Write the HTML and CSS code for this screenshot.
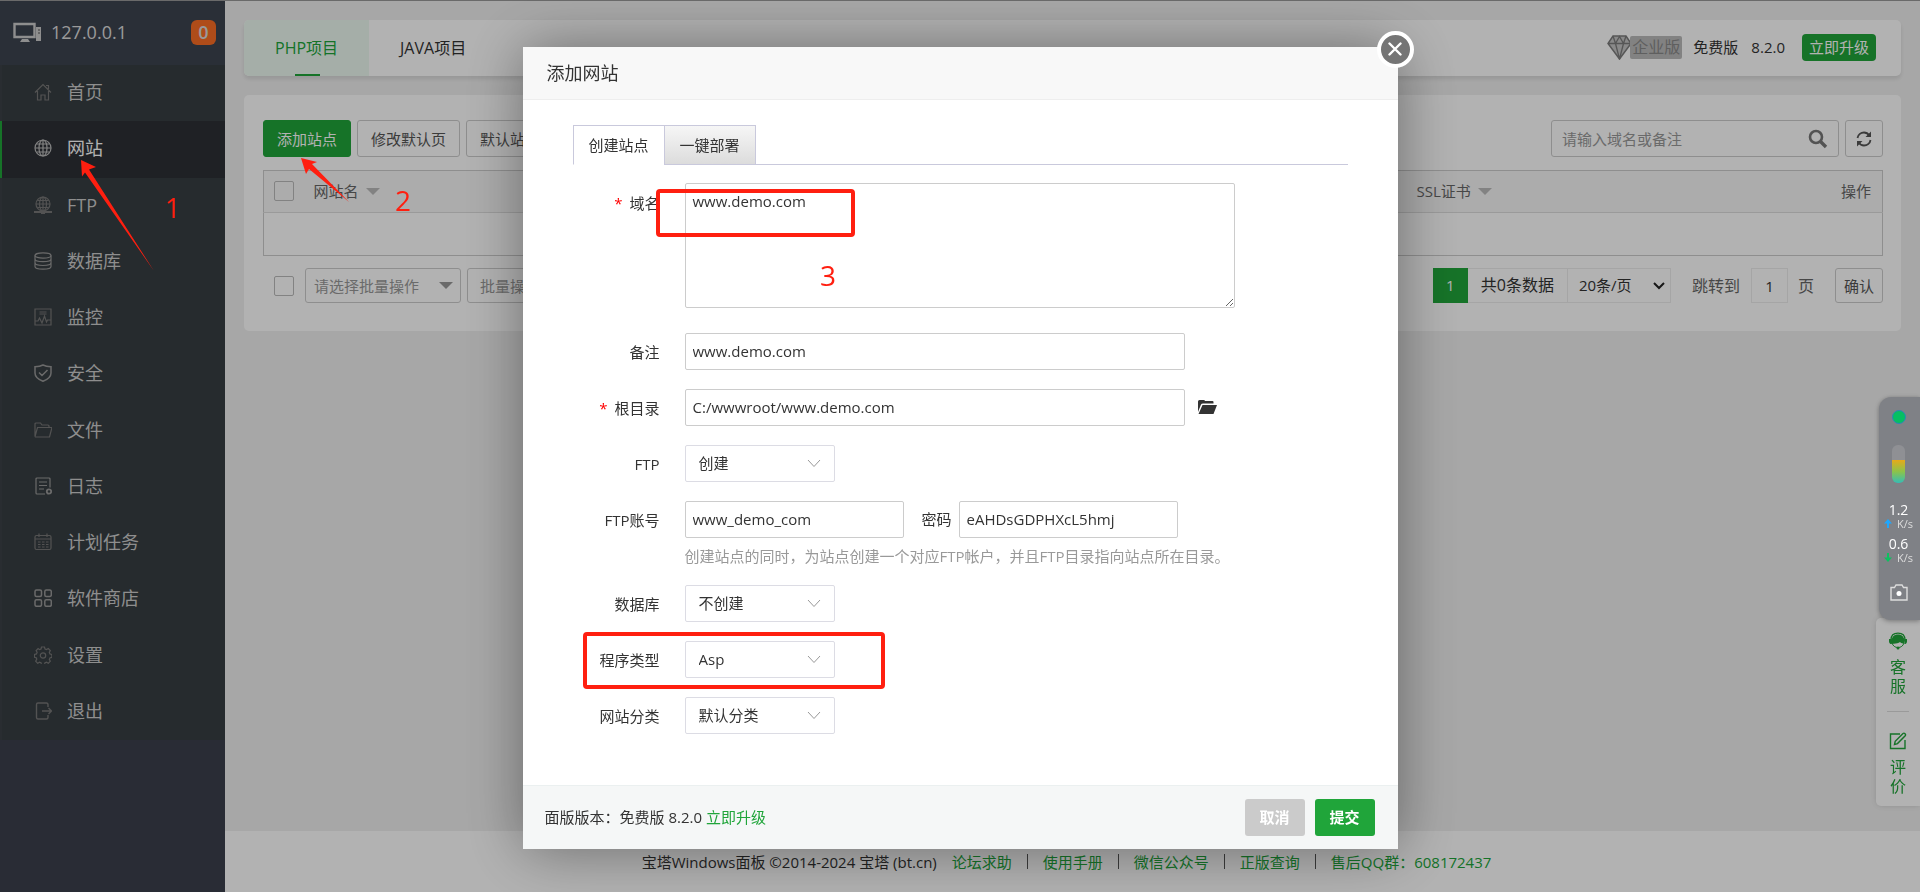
FILE: index.html
```html
<!DOCTYPE html>
<html lang="zh-CN">
<head>
<meta charset="utf-8">
<title>宝塔Windows面板</title>
<link rel="stylesheet" href="styles.css">
</head>
<body>
<div class="app">
  <aside class="sidebar">
    <div class="host">
      <svg width="29" height="21" viewBox="0 0 29 21" fill="none"><path d="M1.5 2h20v13h-20z" stroke="#ccc" stroke-width="2.4"/><path d="M9 17h6l2 3H7z" fill="#ccc"/><path d="M23 5h5v14h-5z" fill="#ccc"/><path d="M25 8h2M25 11h2" stroke="#555"/></svg>
      <span class="host-ip">127.0.0.1</span>
      <span class="host-count">0</span>
    </div>
    <nav class="menu">
      <a class="menu-item" href="#"><svg class="ico" viewBox="0 0 18 18"><path d="M1 9.500 9 1.500l8 8M3.500 8v9h3.500v-5h4v5h3.500V8M12 2.500h2.500V6"/></svg>首页</a>
      <a class="menu-item active" href="#"><svg class="ico" viewBox="0 0 18 18"><circle cx="9" cy="9" r="8"/><ellipse cx="9" cy="9" rx="4" ry="8"/><path d="M9 1v16M1 9h16M2.500 5h13M2.500 13h13"/></svg>网站</a>
      <a class="menu-item" href="#"><svg class="ico" viewBox="0 0 18 18"><circle cx="9" cy="8" r="7"/><ellipse cx="9" cy="8" rx="3.500" ry="7"/><path d="M9 1v14M2 8h14M3.500 4.500h11M3.500 11.500h11"/><path d="M0 16h18" stroke-width="2"/><path d="M7 16.500h4" stroke-width="3"/></svg>FTP</a>
      <a class="menu-item" href="#"><svg class="ico bright" viewBox="0 0 18 18"><ellipse cx="9" cy="3.500" rx="8" ry="2.700"/><path d="M1 3.500v11c0 3.600 16 3.600 16 0v-11M1 7c0 3.600 16 3.600 16 0M1 10.800c0 3.600 16 3.600 16 0"/></svg>数据库</a>
      <a class="menu-item" href="#"><svg class="ico" viewBox="0 0 18 18"><path d="M1 1h16v16H1zM5.500 4h7M5.500 6h7M1 13h3l1.500-3L8 15l2.500-7 2 6 1-2H17"/></svg>监控</a>
      <a class="menu-item" href="#"><svg class="ico bright" viewBox="0 0 18 18"><path stroke-width="1.500" d="M9 1c3 1.700 5 1.700 8 1.700V9c0 4-3.500 6.500-8 8.300C4.500 15.500 1 13 1 9V2.700C4 2.700 6 2.700 9 1zM5 8.500l3 3L13.500 6"/></svg>安全</a>
      <a class="menu-item" href="#"><svg class="ico" viewBox="0 0 18 18"><path d="M1 15V3q0-1 1-1h4.500l1.500 2h6q1 0 1 1v1.500M1 15.500 3.500 6.500H18L15.500 16H2q-1 0-1-1z"/></svg>文件</a>
      <a class="menu-item" href="#"><svg class="ico bright" viewBox="0 0 18 18"><path d="M16 10.500V2q0-1-1-1H3Q2 1 2 2v14q0 1 1 1h8M5 5h8M5 8.500h8M5 12h5"/><circle cx="15" cy="14.500" r="2.200" stroke-width="1.800"/></svg>日志</a>
      <a class="menu-item" href="#"><svg class="ico" viewBox="0 0 18 18"><rect x="1" y="2.500" width="16" height="14" rx="1.500"/><path d="M1 6h16M5 .5V4M13 .5V4"/><path stroke-dasharray="2.500 1.500" d="M4 9h10.500M4 11.500h10.500M4 14h10.500"/></svg>计划任务</a>
      <a class="menu-item" href="#"><svg class="ico bright" viewBox="0 0 18 18"><g stroke-width="1.500"><rect x="1" y="1" width="6.500" height="6.500" rx="1.500"/><rect x="10.800" y="1" width="6.500" height="6.500" rx="1.500"/><rect x="1" y="10.800" width="6.500" height="6.500" rx="1.500"/><rect x="10.800" y="10.800" width="6.500" height="6.500" rx="1.500"/></g></svg>软件商店</a>
      <a class="menu-item" href="#"><svg class="ico" viewBox="0 0 18 18"><path d="M7.500 1h3l.5 2 1.500.6 1.800-1.100 2 2.100-1 1.800.6 1.500 2 .6v2.800l-2 .6-.6 1.500 1 1.800-2 2.100-1.800-1.100-1.500.6-.5 2h-3l-.5-2-1.500-.6-1.800 1.100-2-2.100 1-1.800L2.500 12l-2-.7V8.500l2-.6.6-1.500-1-1.800 2-2.100L5.500 3.600 7 3z"/><circle cx="9" cy="9.500" r="2.700"/></svg>设置</a>
      <a class="menu-item" href="#"><svg class="ico" viewBox="0 0 18 18"><path stroke-width="1.400" d="M14 5V2.500Q14 1 12.500 1H4Q2.500 1 2.500 2.500v13Q2.500 17 4 17h8.500q1.500 0 1.500-1.500V13M8 9h9.500M14.500 6l3 3-3 3"/></svg>退出</a>
    </nav>
  </aside>

  <div class="main">
    <main class="content">
      <section class="card topbar">
        <nav class="tabs">
          <a class="tab active" href="#">PHP项目</a>
          <a class="tab" href="#">JAVA项目</a>
        </nav>
        <div class="version">
          <span class="badge">
            <svg width="25" height="25" viewBox="0 0 25 25"><path d="M6 1h13l5 7.500L12.500 24 1 8.500z" fill="#c4c4c4" stroke="#7c7c7c" stroke-width="1.500"/><path d="M1 8.500h23M6 1l2.500 7.500L12.500 24l4-15.500L19 1M8.500 8.500l4-7 4 7" fill="none" stroke="#7c7c7c" stroke-width="1.300"/></svg>
            <span class="badge-text">企业版</span>
          </span>
          <span>免费版</span>
          <span class="version-no">8.2.0</span>
          <button class="upgrade" type="button">立即升级</button>
        </div>
      </section>

      <section class="card sites">
        <div class="toolbar">
          <button class="btn primary" type="button">添加站点</button>
          <button class="btn" type="button">修改默认页</button>
          <button class="btn" type="button">默认站点</button>
          <div class="search">
            <input class="search-input" type="text" placeholder="请输入域名或备注" aria-label="搜索">
            <svg width="20" height="20" viewBox="0 0 20 20" fill="none" stroke="#777"><circle cx="8" cy="8" r="6" stroke-width="2.600"/><path d="M12.500 12.500 18 18" stroke-width="3.400"/></svg>
          </div>
          <button class="btn square" type="button" aria-label="刷新"><svg width="16" height="16" viewBox="0 0 16 16" fill="none" stroke="#555" stroke-width="1.800"><path d="M1.500 7C2 3.500 5 1.500 8 1.500c2 0 4 1 5.300 3M14.500 9c-.5 3.500-3.500 5.500-6.500 5.500-2 0-4-1-5.300-3"/><path d="M15 .5V6H9.500zM1 15.500V10h5.500z" fill="#555" stroke="none"/></svg></button>
        </div>
        <table class="grid">
          <thead><tr>
            <th class="col-check"><input class="check" type="checkbox" aria-label="全选"></th>
            <th class="col-name">网站名<i class="caret"></i></th>
            <th class="col-ssl">SSL证书<i class="caret"></i></th>
            <th class="col-op">操作</th>
          </tr></thead>
          <tbody><tr><td colspan="4"></td></tr></tbody>
        </table>
        <div class="pager">
          <input class="check" type="checkbox" aria-label="选择全部站点">
          <div class="batch"><select class="batch-select" aria-label="批量操作"><option>请选择批量操作</option></select><i class="caret"></i></div>
          <button class="btn batch-btn" type="button">批量操作</button>
          <div class="pages">
            <span class="page-current">1</span>
            <span class="page-cell">共0条数据</span>
            <div class="page-size"><select aria-label="每页条数"><option>20条/页</option></select><svg width="12" height="8" viewBox="0 0 12 8" fill="none" stroke="#222" stroke-width="2"><path d="m1 1 5 5 5-5"/></svg></div>
          </div>
          <label class="jump" for="jump">跳转到</label>
          <input class="jump-input" id="jump" type="text" value="1">
          <span class="jump-unit">页</span>
          <button class="btn confirm" type="button">确认</button>
        </div>
      </section>
    </main>
    <footer class="footer">
      <span>宝塔Windows面板 ©2014-2024 宝塔 (bt.cn)</span>
      <a href="#">论坛求助</a><i class="bar"></i><a href="#">使用手册</a><i class="bar"></i><a href="#">微信公众号</a><i class="bar"></i><a href="#">正版查询</a><i class="bar"></i><a href="#">售后QQ群：608172437</a>
    </footer>
  </div>
</div>

<aside class="service">
  <a class="service-item" href="#"><svg width="18" height="18" viewBox="0 0 18 18"><path d="M2 8C2 3.500 5 1.200 9 1.200S16 3.500 16 8" fill="none" stroke="#20a53a" stroke-width="1.300"/><path d="M2.500 8.500C3 4.500 5.500 2.500 9 2.500s6 2 6.500 6l.5 3c-2.500 0-4-.5-5-1.500-2 1.500-5 2-9 1.500zM0 7h2.500v5H1.500Q0 11 0 9.500zM18 7h-2.500v5h1Q18 11 18 9.500z" fill="#20a53a"/><path d="M3 11c1 3 3 4.500 6 4.500s5-1.500 6-4.500" fill="none" stroke="#20a53a"/><circle cx="9" cy="16" r="1.500" fill="#20a53a"/></svg><span>客服</span></a>
  <a class="service-item" href="#"><svg width="18" height="18" viewBox="0 0 18 18" fill="none" stroke="#20a53a" stroke-width="1.400"><path d="M11 2H1.500v14.500H16V8M5.500 12.500l.7-3.200L14 1.500q1-.8 2 .2t.2 2L8.500 11.600z"/></svg><span>评价</span></a>
</aside>

<div class="overlay">
  <form class="modal" role="dialog" aria-labelledby="modal-title">
    <header class="modal-head" id="modal-title">添加网站</header>
    <button class="close" type="button" aria-label="关闭"><svg width="14" height="14" viewBox="0 0 14 14" stroke="#fff" stroke-width="2.400" stroke-linecap="round"><path d="m1.500 1.500 11 11M12.500 1.500l-11 11"/></svg></button>
    <div class="modal-body">
      <div class="mtabs">
        <button class="mtab active" type="button">创建站点</button><button class="mtab" type="button">一键部署</button>
      </div>
      <div class="row row-area">
        <label class="label" for="domain"><em>*</em>域名</label>
        <textarea class="field area" id="domain">www.demo.com</textarea>
      </div>
      <div class="row">
        <label class="label" for="note">备注</label>
        <input class="field wide" id="note" type="text" value="www.demo.com">
      </div>
      <div class="row">
        <label class="label" for="root"><em>*</em>根目录</label>
        <input class="field wide" id="root" type="text" value="C:/wwwroot/www.demo.com">
        <svg class="folder" width="20" height="16" viewBox="0 0 20 16" fill="#333"><path d="M1 13V2.500Q1 1 2.500 1h4Q8 1 8 2h7.500q1 0 1 1v1.500H6q-1.500 0-2 1zM5.500 6H20l-3.500 9H1.500z"/></svg>
      </div>
      <div class="row">
        <label class="label" for="ftp">FTP</label>
        <div class="select"><select id="ftp"><option>创建</option></select><svg width="14" height="9" viewBox="0 0 14 9"><path d="m1 1 6 6.500L13 1"/></svg></div>
      </div>
      <div class="row row-tight">
        <label class="label" for="account">FTP账号</label>
        <input class="field half" id="account" type="text" value="www_demo_com">
        <label class="pwd" for="pwd">密码</label>
        <input class="field half" id="pwd" type="text" value="eAHDsGDPHXcL5hmj">
      </div>
      <p class="hint">创建站点的同时，为站点创建一个对应FTP帐户，并且FTP目录指向站点所在目录。</p>
      <div class="row">
        <label class="label" for="db">数据库</label>
        <div class="select"><select id="db"><option>不创建</option></select><svg width="14" height="9" viewBox="0 0 14 9"><path d="m1 1 6 6.500L13 1"/></svg></div>
      </div>
      <div class="row">
        <label class="label" for="type">程序类型</label>
        <div class="select"><select id="type"><option>Asp</option></select><svg width="14" height="9" viewBox="0 0 14 9"><path d="m1 1 6 6.500L13 1"/></svg></div>
      </div>
      <div class="row">
        <label class="label" for="cat">网站分类</label>
        <div class="select"><select id="cat"><option>默认分类</option></select><svg width="14" height="9" viewBox="0 0 14 9"><path d="m1 1 6 6.500L13 1"/></svg></div>
      </div>
    </div>
    <footer class="modal-foot">
      <span>面版版本：免费版 8.2.0 <a href="#">立即升级</a></span>
      <div class="actions"><button class="act cancel" type="button">取消</button><button class="act submit" type="submit">提交</button></div>
    </footer>
  </form>
</div>

<aside class="monitor">
  <i class="dot"></i>
  <i class="gauge"></i>
  <div class="rate"><b>1.2</b><span><svg width="8" height="9" viewBox="0 0 8 9" fill="#1ea7ff"><path d="M4 0 8 4.500H5V9H3V4.500H0z"/></svg>K/s</span></div>
  <div class="rate"><b>0.6</b><span><svg width="8" height="9" viewBox="0 0 8 9" fill="#0fbf60"><path d="M4 9 0 4.500h3V0h2v4.500h3z"/></svg>K/s</span></div>
  <svg class="camera" width="18" height="17" viewBox="0 0 18 17" fill="none" stroke="#ddd" stroke-width="1.400"><path d="M1 3.500h3.500L6 1h6l1.500 2.500H17V16H1z"/><circle cx="9" cy="9.500" r="2.500" fill="#fff" stroke="none"/></svg>
</aside>

<svg class="arrows" width="400" height="300" viewBox="0 0 400 300" fill="#ff1f10"><path d="m81 160 15 7-7 2.500L154 271 85 172.500l-3 4z"/><path d="m301 158 16 4-5 2 37 38-40-33-3 5z"/></svg>
<span class="mark mark-1">1</span>
<span class="mark mark-2">2</span>
<span class="mark mark-3">3</span>
<i class="frame frame-domain"></i>
<i class="frame frame-type"></i>
</body>
</html>
```

FILE: styles.css
```css
* { box-sizing: border-box; }

body {
  margin: 0;
  border-top: 1px solid #999;
  background: #f0f0f0;
  color: #333;
  font-family: "Open Sans", "Noto Sans CJK SC", sans-serif;
  font-size: 15px;
  line-height: 20px;
}

button, input, select, textarea { font: inherit; color: inherit; }
button { cursor: pointer; padding: 0; }
a { color: #20a53a; text-decoration: none; }
select { appearance: none; }

.app { display: flex; min-height: calc(100vh - 1px); }

/* sidebar */
.sidebar { flex: none; width: 225px; background: #3c404d; }
.host { display: flex; align-items: center; height: 64px; padding: 0 9px 2px 13px; background: #3d4450; color: #ddd; font-size: 18px; }
.host-ip { margin-left: 9px; }
.host-count { margin-left: auto; width: 25px; height: 25px; border-radius: 6px; background: #fb6e24; font-weight: 600; line-height: 24px; text-align: center; }
.menu { display: grid; grid-auto-rows: 1fr; min-height: 675px; background: #373e42; }
.menu-item { display: flex; align-items: center; gap: 15px; padding: 0 0 2px 32px; border-left: 2px solid #3c4147; color: #ccc; font-size: 18px; }
.menu-item.active { background: #2d3036; border-left-color: #20a53a; color: #fff; }
.ico { width: 18px; height: 18px; fill: none; stroke: #777; stroke-width: 1.2; }
.ico.bright { stroke: #999; }
.active .ico { stroke: #bbb; }

/* page */
.main { flex: 1; display: flex; flex-direction: column; min-width: 0; }
.content { flex: 1; padding: 19px; }
.card { background: #fff; border-radius: 5px; }
.topbar { display: flex; justify-content: space-between; height: 56px; box-shadow: 0 3px 4px rgba(0, 0, 0, .1); }
.tabs { display: flex; font-size: 16px; }
.tab { position: relative; padding: 0 31px; color: #333; line-height: 56px; }
.tab.active { background: #edfaf1; color: #20a53a; border-radius: 5px 0 0 5px; }
.tab.active::after { content: ""; position: absolute; left: 50%; bottom: 0; width: 25px; height: 2px; margin-left: -12px; background: #20a53a; }
.version { display: flex; align-items: center; padding: 0 25px 2px 0; }
.badge { display: flex; align-items: center; margin-right: 11px; }
.badge-text { margin-left: -2px; padding: 0 2px 0 2px; border-radius: 2px; background: #bbb; color: #888; font-size: 16px; line-height: 23px; }
.version-no { margin: 0 17px 0 13px; }
.upgrade { height: 27px; padding: 0 7px; border: 0; border-radius: 4px; background: #20a53a; color: #fff; }

.sites { margin-top: 19px; padding: 25px 18px 28px 19px; }
.toolbar { display: flex; gap: 6px; }
.btn { height: 37px; padding: 0 12px; border: 1px solid #ccc; border-radius: 3px; background: #fff; color: #555; white-space: nowrap; }
.toolbar .btn { padding: 0 13px; }
.btn.primary { background: #20a53a; border-color: #20a53a; color: #fff; }
.toolbar .square { display: grid; place-items: center; width: 38px; padding: 0; }
.search { display: flex; align-items: center; width: 288px; height: 37px; margin-left: auto; padding: 0 10px; border: 1px solid #ccc; border-radius: 3px; }
.search-input { flex: 1; min-width: 0; padding: 0; border: 0; outline: 0; background: none; }
.search-input::placeholder { color: #999; }
.grid { width: 100%; margin-top: 13px; border-collapse: collapse; table-layout: fixed; border: 1px solid #ccc; }
.grid th { height: 42px; padding: 0 11px 2px 10px; border-bottom: 1px solid #ddd; background: #f6f6f6; color: #666; font-weight: 400; text-align: left; }
.grid td { height: 43px; }
.grid .col-check { width: 40px; }
.grid .col-ssl { width: 366px; }
.grid .col-op { width: 110px; text-align: right; }
.check { appearance: none; display: block; flex: none; width: 20px; height: 20px; margin: 0; border: 1px solid #bbb; border-radius: 2px; }
.caret { display: inline-block; margin-left: 7px; border: 7px solid transparent; border-top-color: #bbb; border-bottom: 0; vertical-align: 2px; }
.pager { display: flex; align-items: center; margin-top: 12px; padding-left: 11px; }
.batch { display: grid; align-items: center; width: 156px; margin: 0 6px 0 11px; }
.batch-select { grid-area: 1 / 1; height: 35px; padding: 0 8px; border: 1px solid #ccc; border-radius: 3px; background: none; color: #999; }
.batch .caret { grid-area: 1 / 1; justify-self: end; margin-right: 8px; border-top-color: #999; }
.batch-btn { height: 35px; color: #999; }
.pages { display: flex; margin-left: auto; line-height: 33px; }
.page-current { width: 35px; background: #20a53a; color: #fff; line-height: 35px; text-align: center; }
.page-cell { padding: 0 13px; border: 1px solid #ececec; border-left: 0; font-size: 16px; }
.page-size { display: grid; align-items: center; width: 103px; }
.page-size select { grid-area: 1 / 1; height: 35px; padding: 0 11px; border: 1px solid #ececec; border-left: 0; background: none; }
.page-size svg { grid-area: 1 / 1; justify-self: end; margin-right: 6px; }
.jump { margin: 0 11px 0 21px; font-size: 16px; color: #666; }
.jump-input { width: 37px; height: 35px; padding: 0; border: 1px solid #ececec; text-align: center; background: none; }
.jump-unit { margin: 0 21px 0 10px; font-size: 16px; color: #666; }
.btn.confirm { height: 35px; padding: 0 8px; }
.footer { display: flex; align-items: center; justify-content: center; height: 61px; padding-right: 12px; background: #fff; }
.footer span { margin-right: 15px; }
.bar { width: 1px; height: 15px; margin: 0 15px; background: #555; }

/* service shortcuts */
.service { position: fixed; right: 0; top: 618px; width: 44px; padding: 14px 11px 10px; border-radius: 5px 0 0 5px; background: #fff; box-shadow: 0 0 6px rgba(0, 0, 0, .15); }
.service-item { display: flex; flex-direction: column; align-items: center; gap: 8px; font-size: 16px; line-height: 19px; text-align: center; }
.service-item span { width: 16px; }
.service-item + .service-item { margin-top: 15px; padding-top: 20px; border-top: 1px solid #ddd; }

/* dialog */
.overlay { position: fixed; inset: 0; display: flex; align-items: center; justify-content: center; padding-top: 3px; background: rgba(0, 0, 0, .3); }
.modal { position: relative; width: 875px; background: #fff; border-radius: 2px; box-shadow: 1px 1px 60px rgba(0, 0, 0, .4); }
.modal-head { padding: 0 24px; border-bottom: 1px solid #eee; background: #f8f8f8; font-size: 18px; line-height: 52px; }
.close { position: absolute; top: -16px; right: -16px; display: grid; place-items: center; width: 37px; height: 37px; border: 4px solid #fff; border-radius: 50%; background: #757575; }
.modal-body { padding: 25px 50px 32px; }
.mtabs { display: flex; margin-bottom: 18px; border-bottom: 1px solid #c9c9dc; }
.mtab { height: 40px; margin-bottom: -1px; padding: 0 15px; border: 1px solid #c9c9dc; background: linear-gradient(#f6f6f6, #dcdcdc); }
.mtab.active { border-right: 0; border-bottom-color: #fff; background: #fff; }
.row { display: flex; align-items: center; margin-bottom: 19px; }
.row-area { align-items: flex-start; margin-bottom: 25px; }
.label { width: 87px; margin-right: 25px; padding-top: 2px; text-align: right; }
.row-area .label { padding-top: 10px; }
.row-tight { margin-bottom: 8px; }
.label em { margin-right: 7px; color: #f00; font-style: normal; }
.field { height: 37px; padding: 0 7px; border: 1px solid #ccc; border-radius: 2px; background: #fff; outline: 0; }
.wide { width: 500px; }
.half { width: 219px; }
.area { width: 550px; height: 125px; padding: 7px; }
.folder { margin-left: 12px; }
.pwd { margin: 0 7px 0 18px; }
.select { display: grid; align-items: center; width: 150px; }
.select select { grid-area: 1 / 1; height: 37px; padding: 0 13px; border: 1px solid #dcdce4; border-radius: 2px; background: #fff; }
.select svg { grid-area: 1 / 1; justify-self: end; margin-right: 14px; fill: none; stroke: #999; pointer-events: none; }
.hint { margin: 0 0 19px 112px; color: #999; }
.modal-foot { display: flex; align-items: center; justify-content: space-between; height: 64px; padding: 0 23px 0 22px; border-top: 1px solid #ebf0f0; background: #f5f7f7; }
.actions { display: flex; gap: 10px; }
.act { width: 60px; height: 37px; border: 0; border-radius: 3px; color: #fff; font-weight: 700; }
.cancel { background: #cbcbcb; }
.submit { background: #20a53a; }

/* system monitor dock */
.monitor { position: fixed; right: 0; top: 397px; width: 41px; height: 223px; display: flex; flex-direction: column; align-items: center; padding: 13px 2px 0 0; border-radius: 12px 0 0 12px; background: #7f8186; box-shadow: 0 1px 5px rgba(0, 0, 0, .35); color: #fff; }
.dot { width: 14px; height: 14px; border: 1px solid #2f86b8; border-radius: 50%; background: #05bf62; }
.gauge { flex: none; width: 13px; height: 38px; margin: 21px 0 17px; border-radius: 6px; background: linear-gradient(#8f9094 40%, #e5aa1a 40%, #8cc34a 70%, #35bdb5); }
.rate { display: flex; flex: none; flex-direction: column; align-items: center; height: 34px; font-size: 11px; line-height: 15px; color: #ddd; }
.rate b { font-size: 14px; font-weight: 400; line-height: 19px; color: #fff; }
.rate span { display: flex; align-items: center; gap: 5px; height: 9px; }
.camera { margin-top: 16px; }

/* walkthrough marks */
.arrows { position: absolute; left: 0; top: 0; pointer-events: none; }
.mark { position: absolute; color: #ff1f10; font-size: 28px; line-height: 32px; }
.mark-1 { left: 165px; top: 191px; }
.mark-2 { left: 395px; top: 184px; }
.mark-3 { left: 820px; top: 259px; }
.frame { position: absolute; border: 4px solid #ff1f10; border-radius: 4px; pointer-events: none; }
.frame-domain { left: 656px; top: 189px; width: 199px; height: 48px; }
.frame-type { left: 583px; top: 632px; width: 302px; height: 57px; }
```
